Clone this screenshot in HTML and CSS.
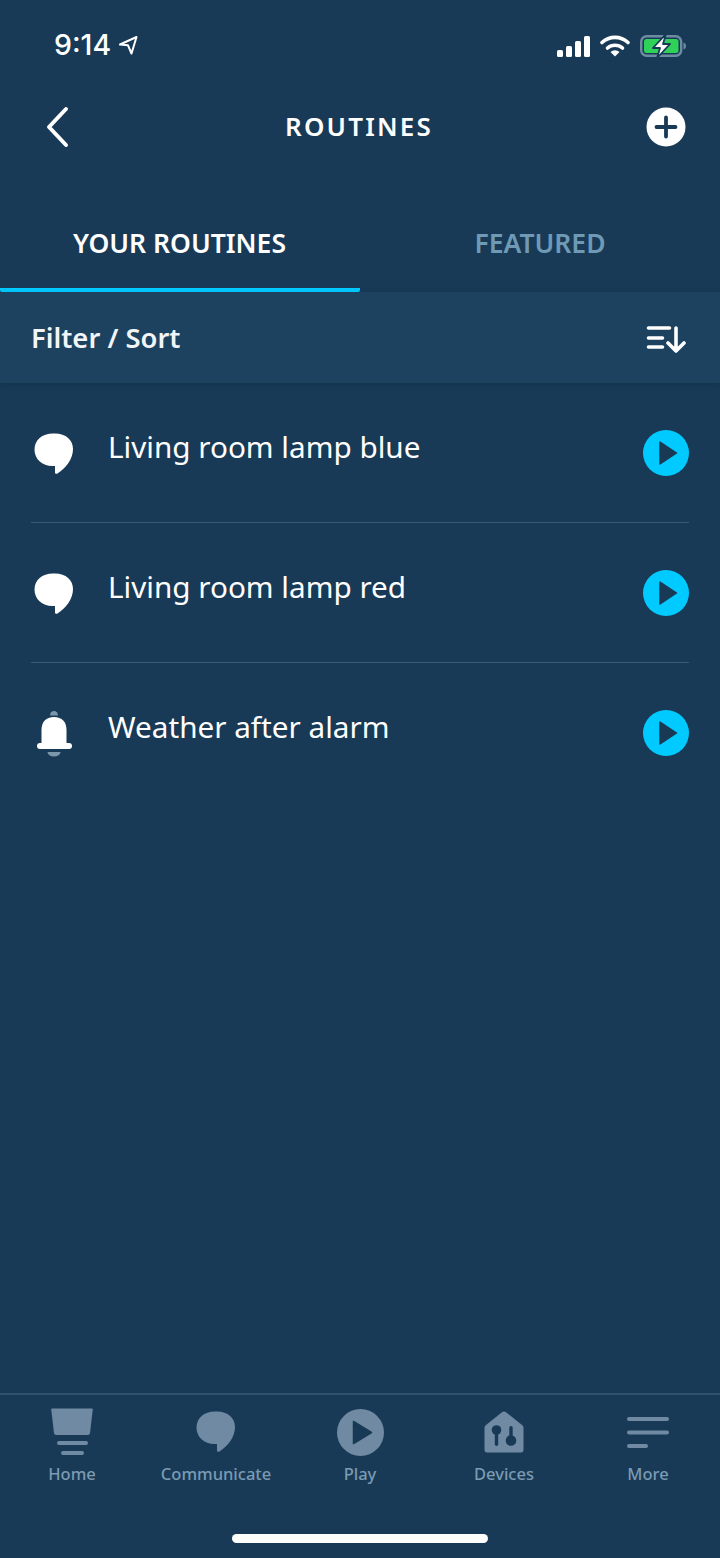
FILE: index.html
```html
<!DOCTYPE html>
<html lang="en">
<head>
<meta charset="utf-8">
<title>Routines</title>
<link rel="stylesheet" href="styles.css">
</head>
<body>
<div class="app">
  <div class="status">
    <div class="status-left">
      <span class="time">9:14</span>
      <svg class="loc" width="20" height="20" viewBox="0 0 20 20"><path d="M18.500 2 2 9.500l8 .8L13.500 18.500z" fill="none" stroke="#fff" stroke-width="2" stroke-linejoin="round"/></svg>
    </div>
    <div class="status-right">
      <svg width="33" height="21" viewBox="0 0 33 21"><g fill="#fff"><rect x="0" y="14" width="6" height="7" rx="1.500"/><rect x="9" y="10" width="6" height="11" rx="1.500"/><rect x="18" y="5" width="6" height="16" rx="1.500"/><rect x="27" y="0" width="6" height="21" rx="1.500"/></g></svg>
      <svg width="30" height="22" viewBox="0 0 30 22"><path d="M2 7.500a19 19 0 0 1 26 0" fill="none" stroke="#fff" stroke-width="3.600" stroke-linecap="round"/><path d="M7.500 13a11.500 11.500 0 0 1 15 0" fill="none" stroke="#fff" stroke-width="3.600" stroke-linecap="round"/><path d="M10.500 17a6.500 6.500 0 0 1 9 0L15 21.500z" fill="#fff"/></svg>
      <svg class="batt" width="46" height="24" viewBox="0 0 46 24"><rect x="1.200" y="2.200" width="40" height="19.600" rx="5.500" fill="none" stroke="#6f8ba3" stroke-width="2.400"/><rect x="4" y="5" width="34.500" height="14" rx="2.500" fill="#30d158"/><path d="M43.500 8.500c1.600.6 2.500 1.800 2.500 3.500s-.9 2.900-2.500 3.500z" fill="#6f8ba3"/><path d="M26 0 13 14h7l-3 10 13-14h-7z" fill="#fff" stroke="#183a56" stroke-width="1.800" stroke-linejoin="round"/></svg>
    </div>
  </div>

  <header class="topbar">
    <svg class="back" width="26" height="42" viewBox="0 0 26 42"><path d="M22 3 5 21l17 18" fill="none" stroke="#fff" stroke-width="4" stroke-linecap="round" stroke-linejoin="round"/></svg>
    <h1 class="title">ROUTINES</h1>
    <svg class="add" width="40" height="40" viewBox="0 0 40 40"><circle cx="20" cy="20" r="19.500" fill="#fff"/><path d="M20 10.500v19M10.500 20h19" stroke="#183a56" stroke-width="3.800" stroke-linecap="round"/></svg>
  </header>

  <nav class="tabs">
    <div class="tab tab-active">YOUR ROUTINES</div>
    <div class="tab">FEATURED</div>
  </nav>

  <div class="filter">
    <span class="filter-label">Filter / Sort</span>
    <svg width="40" height="32" viewBox="0 0 40 32"><g fill="none" stroke="#fff" stroke-width="3.600" stroke-linecap="round" stroke-linejoin="round"><path d="M2.500 7h21M2.500 17h14M2.500 26h14M30 7v23M22 22l8 8 8-8"/></g></svg>
  </div>

  <main class="list">
    <div class="row">
      <svg class="row-icon" width="40" height="42" viewBox="0 0 40 42"><path d="M19 .500h2C32 .500 39 7 39 16c0 10-7 19-15.500 24.500-1 .6-2.500.200-2.500-1V33h-2.500C8 33 .500 26 .500 16.500S8 .500 19 .500z" fill="#fff"/></svg>
      <span class="row-text">Living room lamp blue</span>
      <svg class="play" width="46" height="46" viewBox="0 0 46 46"><circle cx="23" cy="23" r="23" fill="#00caff"/><path d="M17 12 33.500 23 17 34z" fill="#183a56" stroke="#183a56" stroke-width="1.500" stroke-linejoin="round"/></svg>
    </div>
    <div class="row">
      <svg class="row-icon" width="40" height="42" viewBox="0 0 40 42"><path d="M19 .500h2C32 .500 39 7 39 16c0 10-7 19-15.500 24.500-1 .6-2.500.200-2.500-1V33h-2.500C8 33 .500 26 .500 16.500S8 .500 19 .500z" fill="#fff"/></svg>
      <span class="row-text">Living room lamp red</span>
      <svg class="play" width="46" height="46" viewBox="0 0 46 46"><circle cx="23" cy="23" r="23" fill="#00caff"/><path d="M17 12 33.500 23 17 34z" fill="#183a56" stroke="#183a56" stroke-width="1.500" stroke-linejoin="round"/></svg>
    </div>
    <div class="row row-last">
      <svg class="row-icon" width="40" height="48" viewBox="0 0 36 48"><path d="M14 5.500a4 4.500 0 0 1 8 0z" fill="#7c96ab"/><path d="M18 7c8 0 12.500 5 12.500 13v14H5.500V20C5.500 12 10 7 18 7z" fill="#fff"/><rect x="1" y="33" width="35" height="6" rx="3" fill="#fff"/><path d="M11.500 42h13a6.500 4.500 0 0 1-13 0z" fill="#7c96ab"/></svg>
      <span class="row-text">Weather after alarm</span>
      <svg class="play" width="46" height="46" viewBox="0 0 46 46"><circle cx="23" cy="23" r="23" fill="#00caff"/><path d="M17 12 33.500 23 17 34z" fill="#183a56" stroke="#183a56" stroke-width="1.500" stroke-linejoin="round"/></svg>
    </div>
  </main>

  <footer class="bottom">
    <div class="bottom-nav">
      <div class="nav-item">
        <div class="nav-icon"><svg width="44" height="48" viewBox="0 0 44 48"><path d="M2 .500h40c.5 0 .8.400.8.800L40 25c-.2 1.200-1 2-2.200 2H6.200C5 27 4.200 26.200 4 25L1.200 1.300c0-.4.300-.8.800-.8z" fill="#6f8aa2"/><rect x="7" y="33" width="31" height="4" rx="2" fill="#6f8aa2"/><rect x="11" y="43" width="23" height="4" rx="2" fill="#6f8aa2"/></svg></div>
        <span>Home</span>
      </div>
      <div class="nav-item">
        <div class="nav-icon"><svg width="40" height="42" viewBox="0 0 40 42"><path d="M19 .500h2C32 .500 39 7 39 16c0 10-7 19-15.500 24.500-1 .6-2.500.200-2.500-1V33h-2.500C8 33 .500 26 .500 16.500S8 .500 19 .500z" fill="#6f8aa2"/></svg></div>
        <span>Communicate</span>
      </div>
      <div class="nav-item">
        <div class="nav-icon"><svg width="47" height="47" viewBox="0 0 47 47"><circle cx="23.500" cy="23.500" r="23.500" fill="#6f8aa2"/><path d="M16.500 12.500 34.500 23.500 16.500 34.500z" fill="#183a56" stroke="#183a56" stroke-width="1.500" stroke-linejoin="round"/></svg></div>
        <span>Play</span>
      </div>
      <div class="nav-item">
        <div class="nav-icon"><svg width="40" height="42" viewBox="0 0 40 42"><path d="M18 1.200c1.200-1 2.800-1 4 0l16 12.800c1 .8 1.500 1.800 1.500 3V39c0 1.400-1 2.500-2.500 2.500H3C1.500 41.500.5 40.400.5 39V17c0-1.200.5-2.200 1.500-3z" fill="#6f8aa2"/><circle cx="12.500" cy="19" r="4.800" fill="#183a56"/><rect x="10.800" y="20" width="3.400" height="15" rx="1.700" fill="#183a56"/><circle cx="27" cy="29.500" r="5.300" fill="#183a56"/><rect x="25.300" y="15" width="3.400" height="15" rx="1.700" fill="#183a56"/></svg></div>
        <span>Devices</span>
      </div>
      <div class="nav-item">
        <div class="nav-icon"><svg width="44" height="31" viewBox="0 0 44 31"><g fill="#6f8aa2"><rect x="1" y="0" width="42" height="4" rx="2"/><rect x="1" y="13.500" width="42" height="4" rx="2"/><rect x="1" y="27" width="21" height="4" rx="2"/></g></svg></div>
        <span>More</span>
      </div>
    </div>
    <div class="home-indicator"></div>
  </footer>
</div>
</body>
</html>
```

FILE: styles.css
```css
* { box-sizing: border-box; }
html, body { margin: 0; padding: 0; }
body { background: #183a56; font-family: "Noto Sans", "Open Sans", sans-serif; color: #fff; }
.app { width: 720px; height: 1558px; display: flex; flex-direction: column; background: #183a56; }

.status { height: 90px; padding: 30px 34px 0 54px; display: flex; justify-content: space-between; align-items: flex-start; flex-shrink: 0; }
.status-left { display: flex; align-items: center; gap: 7px; height: 30px; }
.time { font-family: "Inter", sans-serif; font-size: 28.5px; font-weight: 500; line-height: 30px; }
.status-right { display: flex; align-items: center; gap: 10px; height: 30px; padding-top: 2px; }

.topbar { height: 74px; padding: 0 34px 0 44px; display: flex; align-items: center; justify-content: space-between; position: relative; flex-shrink: 0; }
.title { position: absolute; left: 0; right: 2px; top: 21px; margin: 0; text-align: center; font-size: 26px; font-weight: 600; letter-spacing: 2.2px; line-height: 30px; }

.tabs { height: 128px; display: flex; flex-shrink: 0; padding-top: 26px; }
.tab { width: 360px; height: 102px; padding-top: 35px; text-align: center; font-size: 26.5px; font-weight: 600; line-height: 36px; color: #6f9ab5; }
.tab-active { color: #fff; border-bottom: 4px solid #00caff; border-radius: 2px; margin-left: 0; padding-right: 1px; }

.filter { height: 91px; background: #1c4260; padding: 0 34px 1px 31px; display: flex; align-items: center; justify-content: space-between; flex-shrink: 0; box-shadow: 0 2px 4px rgba(16, 44, 66, .4); }
.filter-label { font-size: 27.4px; font-weight: 600; color: #f2f5f7; }

.list { flex: 1; padding: 0 31px; }
.row { height: 140px; display: flex; align-items: center; border-bottom: 1px solid #3a5a74; }
.row-last { border-bottom: 0; }
.row-icon { flex-shrink: 0; margin-left: 3px; margin-top: 2px; }
.row-text { flex: 1; margin-left: 34px; font-size: 29.7px; line-height: 40px; margin-top: -12px; }
.play { flex-shrink: 0; }

.bottom { height: 165px; border-top: 2px solid #2f516c; flex-shrink: 0; display: flex; flex-direction: column; }
.bottom-nav { display: flex; height: 122px; }
.nav-item { width: 144px; padding-top: 13px; display: flex; flex-direction: column; align-items: center; gap: 6px; color: #7b9ab3; font-size: 16.5px; font-weight: 500; line-height: 24px; }
.nav-icon { height: 48px; display: flex; align-items: center; justify-content: center; }
.home-indicator { width: 256px; height: 9px; margin: 17px auto 0; background: #fff; border-radius: 5px; }
```
